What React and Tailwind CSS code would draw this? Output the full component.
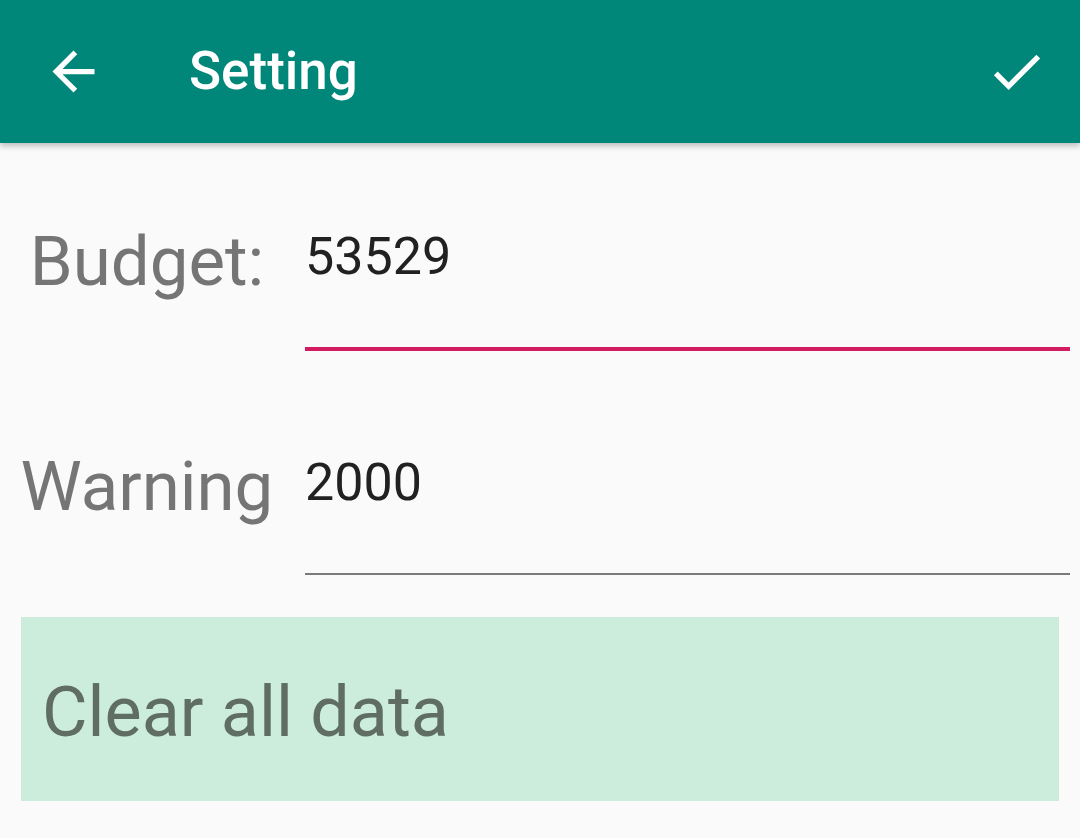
import React from 'react';

const BackIcon = () => (
  <svg width="63" height="63" viewBox="0 0 24 24" fill="white">
    <path d="M20 11H7.83l5.59-5.59L12 4l-8 8 8 8 1.41-1.41L7.83 13H20v-2z" />
  </svg>
);

const CheckIcon = () => (
  <svg width="63" height="63" viewBox="0 0 24 24" fill="white">
    <path d="M9 16.17L4.83 12l-1.42 1.41L9 19 21 7l-1.41-1.41z" />
  </svg>
);

export default function App() {
  return (
    <div
      className="w-[1080px] h-[838px] bg-[#fafafa] overflow-hidden"
      style={{ fontFamily: 'Roboto, "Liberation Sans", sans-serif' }}
    >
      {/* Toolbar */}
      <div className="relative z-10 flex items-center h-[143px] pl-[42px] pr-[32px] bg-[#00877a] shadow-[0_3px_6px_rgba(0,0,0,0.25)]">
        <BackIcon />
        <div className="ml-[84px] text-white text-[53px] leading-none font-medium">Setting</div>
        <div className="ml-auto">
          <CheckIcon />
        </div>
      </div>

      {/* Budget row */}
      <div className="flex items-start">
        <div className="w-[294px] mt-[84px] text-center text-[69px] leading-none text-[#757575]">Budget:</div>
        <div className="flex-1 ml-[11px] mr-[10px] mt-[84px] pb-[60px] border-b-4 border-[#d11d5f]">
          <div className="text-[52px] leading-[60px] text-[#212121]">53529</div>
        </div>
      </div>

      {/* Warning row */}
      <div className="flex items-start">
        <div className="w-[294px] mt-[101px] text-center text-[69px] leading-none text-[#757575]">Warning</div>
        <div className="flex-1 ml-[11px] mr-[10px] mt-[102px] pb-[60px] border-b-2 border-[#7a7a7a]">
          <div className="text-[52px] leading-[60px] text-[#212121]">2000</div>
        </div>
      </div>

      {/* Clear button */}
      <div className="mx-[21px] mt-[42px] h-[184px] pt-[60px] pl-[21px] bg-[#cceddb]">
        <div className="text-[70px] leading-none text-[#5f6d64]">Clear all data</div>
      </div>
    </div>
  );
}
